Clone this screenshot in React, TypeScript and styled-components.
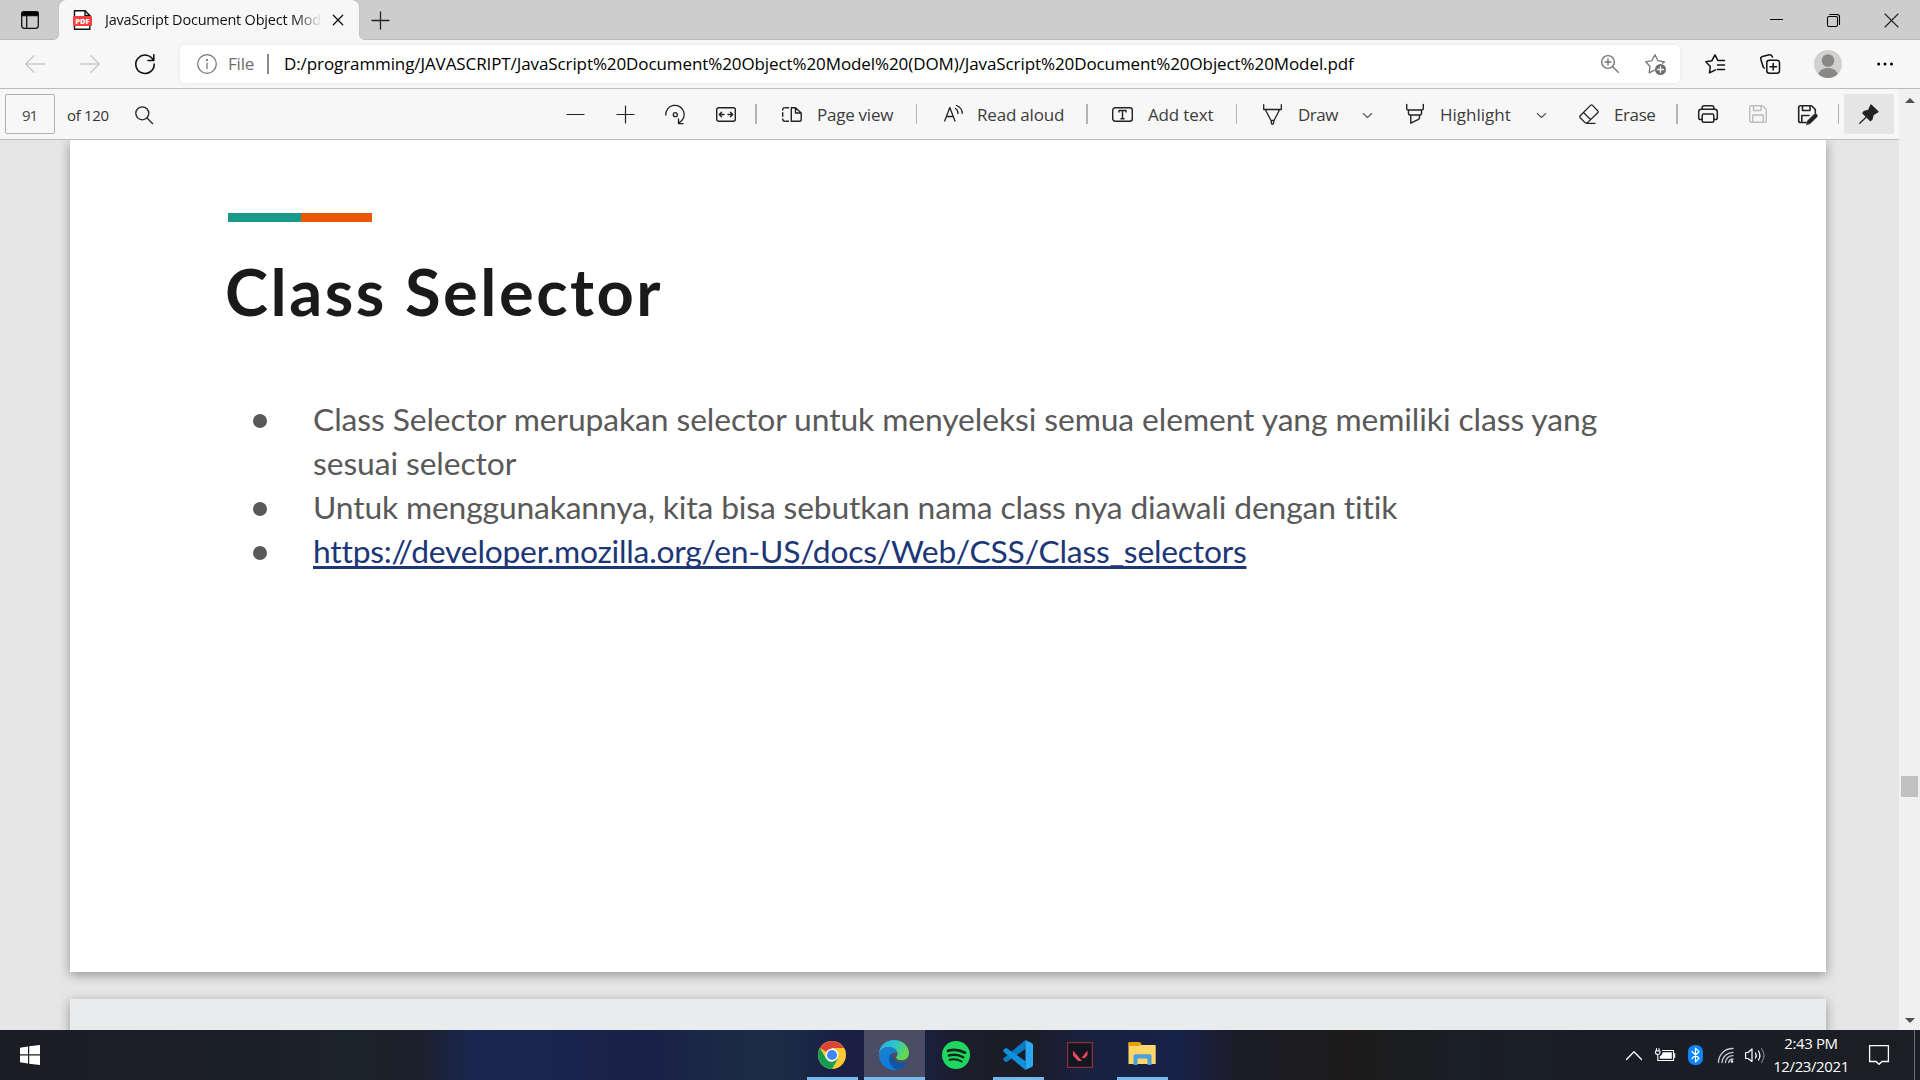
import React from "react";
import styled, { createGlobalStyle } from "styled-components";

const Global = createGlobalStyle`
  * { box-sizing: border-box; }
  html, body { margin: 0; padding: 0; overflow: hidden; }
  body { font-family: "Open Sans", "Noto Sans", sans-serif; }
`;

const Screen = styled.div`
  width: 1920px;
  height: 1080px;
  display: flex;
  flex-direction: column;
  overflow: hidden;
  background: #e6e6e6;
`;

const Glyph = styled.svg<{ $ml?: number; $color?: string; $sw?: number; $mt?: number }>`
  display: block;
  flex: none;
  overflow: visible;
  margin-left: ${(p) => p.$ml ?? 0}px;
  margin-top: ${(p) => p.$mt ?? 0}px;
  fill: none;
  stroke: ${(p) => p.$color ?? "#222"};
  stroke-width: ${(p) => p.$sw ?? 1.4};
  stroke-linecap: round;
  stroke-linejoin: round;
`;

type IconProps = {
  w: number;
  h: number;
  ml?: number;
  mt?: number;
  color?: string;
  sw?: number;
  children: React.ReactNode;
};

const Icon = ({ w, h, ml, mt, color, sw, children }: IconProps) => (
  <Glyph width={w} height={h} viewBox={`0 0 ${w} ${h}`} $ml={ml} $mt={mt} $color={color} $sw={sw}>
    {children}
  </Glyph>
);

const Label = styled.span<{ $w: number; $ml?: number; $ls?: number; $size?: number; $color?: string }>`
  flex: none;
  width: ${(p) => p.$w}px;
  margin-left: ${(p) => p.$ml ?? 0}px;
  white-space: nowrap;
  font-size: ${(p) => p.$size ?? 17}px;
  line-height: 24px;
  letter-spacing: ${(p) => p.$ls ?? 0}px;
  color: ${(p) => p.$color ?? "#3c3c3c"};
`;

const ToolLabel = styled(Label)`
  margin-top: 1px;
`;

const Rule = styled.i<{ $ml: number; $w?: number; $color?: string }>`
  flex: none;
  width: ${(p) => p.$w ?? 1}px;
  height: 20px;
  margin-left: ${(p) => p.$ml}px;
  background: ${(p) => p.$color ?? "#b4b4b4"};
`;

/* Tab strip */

const TabStrip = styled.header`
  flex: none;
  height: 40px;
  display: flex;
  align-items: center;
  background: #cdcdcd;
  box-shadow: inset 0 -1px 0 #bbb;
`;

const Tab = styled.div`
  position: relative;
  flex: none;
  width: 300px;
  height: 40px;
  margin-left: 20px;
  display: flex;
  align-items: center;
  background: #f7f7f7;
  border-radius: 7px 7px 0 0;
  box-shadow: 0 -1px 2px rgba(0, 0, 0, 0.12);
  &::before,
  &::after {
    content: "";
    position: absolute;
    bottom: 0;
    width: 6px;
    height: 6px;
  }
  &::before {
    left: -6px;
    background: radial-gradient(circle at 0 0, #cdcdcd 5px, #bbb 5.5px, #f7f7f7 6.5px);
  }
  &::after {
    right: -6px;
    background: radial-gradient(circle at 100% 0, #cdcdcd 5px, #bbb 5.5px, #f7f7f7 6.5px);
  }
`;

const TabTitle = styled(Label)`
  mask-image: linear-gradient(to right, #000 190px, transparent 217px);
`;

const WindowControls = styled.div`
  margin-left: auto;
  padding-right: 22px;
  display: flex;
  align-items: center;
`;

/* Address row */

const AddressRow = styled.div`
  flex: none;
  height: 49px;
  display: flex;
  align-items: center;
  background: #f7f7f7;
  border-bottom: 1px solid #bbb;
`;

const AddressBar = styled.div`
  flex: none;
  width: 1500px;
  height: 38px;
  margin-left: 25px;
  display: flex;
  align-items: center;
  background: #fff;
  border-radius: 5px;
  box-shadow: 0 0 4px rgba(0, 0, 0, 0.08);
`;

const Avatar = styled.div`
  flex: none;
  width: 28px;
  height: 28px;
  margin-left: 34px;
  border-radius: 50%;
  overflow: hidden;
  background: #d2d0ce;
`;

/* PDF viewer */

const Viewer = styled.div`
  flex: none;
  height: 941px;
  display: flex;
`;

const ViewerMain = styled.div`
  width: 1899px;
  display: flex;
  flex-direction: column;
`;

const PdfBar = styled.div`
  flex: none;
  height: 51px;
  display: flex;
  align-items: center;
  background: #f7f7f7;
  border-bottom: 1px solid #bbb;
`;

const PageInput = styled.div`
  flex: none;
  width: 50px;
  height: 40px;
  margin-left: 5px;
  padding-left: 16px;
  display: flex;
  align-items: center;
  border: 1px solid #b0b0b0;
  border-radius: 2px;
`;

const PinButton = styled.div`
  flex: none;
  width: 50px;
  height: 40px;
  margin-left: 5px;
  display: flex;
  align-items: center;
  background: #e5e5e5;
  border-radius: 2px;
`;

const Canvas = styled.div`
  flex: 1;
  overflow: hidden;
  display: flex;
  flex-direction: column;
  gap: 27px;
  padding-left: 70px;
  background: #e6e6e6;
`;

const Sheet = styled.section<{ $h: number; $bg: string }>`
  flex: none;
  display: flow-root;
  width: 1756px;
  height: ${(p) => p.$h}px;
  background: ${(p) => p.$bg};
  box-shadow: 0 3px 11px rgba(0, 0, 0, 0.36);
`;

const Accent = styled.div`
  width: 144px;
  height: 9px;
  margin: 73px 0 0 158px;
  background: linear-gradient(to right, #1a9988 73px, #eb5600 73px);
`;

const Heading = styled.h1`
  margin: 29px 0 0 155px;
  font-family: Lato, sans-serif;
  font-size: 65px;
  line-height: 80px;
  font-weight: 700;
  letter-spacing: 2.5px;
  color: #1a1a1a;
  white-space: nowrap;
`;

const Bullets = styled.ul`
  margin: 66px 0 0 158px;
  padding: 0;
  list-style: none;
  font-family: Lato, sans-serif;
  font-size: 31.8px;
  line-height: 44px;
  font-variant-ligatures: none;
  color: #595959;
`;

const Bullet = styled.li<{ $ls?: number }>`
  display: flex;
  white-space: nowrap;
  letter-spacing: ${(p) => p.$ls ?? 0}px;
  &::before {
    content: "";
    flex: none;
    width: 14px;
    height: 14px;
    margin: 17px 46px 0 25px;
    border-radius: 50%;
    background: #595959;
  }
`;

const DocLink = styled.a`
  color: #1c3678;
  text-decoration: underline;
  text-decoration-thickness: 3px;
  text-underline-offset: 3px;
  text-decoration-skip-ink: none;
`;

const Scrollbar = styled.div`
  width: 21px;
  display: flex;
  flex-direction: column;
  align-items: center;
  background: #f0f0f0;
`;

const Thumb = styled.div`
  width: 17px;
  height: 21px;
  margin-top: 673px;
  background: #c1c1c1;
`;

/* Taskbar */

const Taskbar = styled.footer`
  flex: none;
  height: 50px;
  display: flex;
  align-items: center;
  background: linear-gradient(
    to right,
    #1b1d25 0,
    #1b1f27 250px,
    #1b232a 350px,
    #1b202c 420px,
    #1a264e 470px,
    #1a2149 650px,
    #1b2c44 750px,
    #1b2b46 790px,
    #191f45 840px,
    #1a2042 920px,
    #1b1d2b 960px,
    #1b1c26 1030px,
    #19213f 1080px,
    #182148 1180px,
    #1b1c25 1240px,
    #1d1b1b 1350px,
    #1a1f24 1460px,
    #1a1d26 1600px,
    #1b1e24 1920px
  );
`;

const Task = styled.div<{ $w: number; $ml: number; $active?: boolean; $open?: boolean }>`
  flex: none;
  width: ${(p) => p.$w}px;
  height: 50px;
  margin-left: ${(p) => p.$ml}px;
  padding-right: ${(p) => p.$w % 2}px;
  display: flex;
  align-items: center;
  justify-content: center;
  background: ${(p) => (p.$active ? "#4a4d64" : "transparent")};
  box-shadow: ${(p) => (p.$open ? "inset 0 -3px 0 #76b9ed" : "none")};
`;

const Tray = styled.div`
  margin-left: auto;
  height: 50px;
  display: flex;
  align-items: center;
`;

const Clock = styled.div`
  width: 74px;
  margin-left: 9px;
  display: flex;
  flex-direction: column;
  align-items: center;
  font-size: 15px;
  line-height: 23px;
  letter-spacing: -0.4px;
  color: #fff;
  white-space: nowrap;
`;

const DesktopEdge = styled.i`
  width: 1px;
  height: 50px;
  margin: 0 5px 0 25px;
  background: #6b6e73;
`;

const Chevron = ({ ml }: { ml: number }) => (
  <Icon w={9} h={5} ml={ml} mt={2} color="#555" sw={1.1}>
    <path d="M.3.5l4.2 4 4.2-4" />
  </Icon>
);

const Tabs = () => (
  <TabStrip>
    <Icon w={18} h={18} ml={21} color="#111" sw={1.3}>
      <rect x=".7" y=".7" width="16.6" height="16.6" rx="2.5" />
      <path d="M.7 4.5V3Q.7.7 3 .7H15Q17.300.7 17.300 3V4.500Z" fill="#000" />
      <path d="M5.700 5V17" />
    </Icon>
    <Tab>
      <Icon w={20} h={20} ml={14} color="#111" sw={1.4}>
        <path d="M1.500.7H12L16.800 5.500V19.300H1.500Z" fill="#fff" strokeLinejoin="miter" />
        <path d="M12 .7V5.500H16.800" />
        <rect x="0" y="6" width="19" height="10" rx="1" fill="#f93e3e" stroke="none" />
        <text
          x="9.500"
          y="13.700"
          textAnchor="middle"
          fill="#fff"
          stroke="none"
          fontFamily="Open Sans, sans-serif"
          fontSize="7.500"
          fontWeight="800"
        >
          PDF
        </text>
      </Icon>
      <TabTitle $w={217} $ml={12} $size={14.5} $ls={-0.22} $color="#111">
        JavaScript Document Object Mod
      </TabTitle>
      <Icon w={10} h={10} ml={11} color="#111" sw={1.3}>
        <path d="M.3.3l9.400 9.400M9.700.3L.3 9.700" />
      </Icon>
    </Tab>
    <Icon w={17} h={17} ml={13} color="#222" sw={1.3}>
      <path d="M0 8.500H17M8.500 0V17" />
    </Icon>
    <WindowControls>
      <Icon w={13} h={13} color="#000" sw={1}>
        <path d="M0 5.500H13" strokeLinecap="butt" />
      </Icon>
      <Icon w={13} h={13} ml={44} color="#000" sw={1.1}>
        <rect x=".5" y="2.500" width="10" height="10" rx="1.500" />
        <path d="M2.800.5H10Q12.500.5 12.500 3V10.500" />
      </Icon>
      <Icon w={13} h={13} ml={45} color="#222" sw={1.1}>
        <path d="M0 0l13 13M13 0L0 13" />
      </Icon>
    </WindowControls>
  </TabStrip>
);

const Address = () => (
  <AddressRow>
    <Icon w={20} h={18} ml={25} mt={-1} color="#c9c9c9" sw={1.4}>
      <path d="M19.500 9H.8M9 .7L.7 9l8.300 8.300" />
    </Icon>
    <Icon w={20} h={18} ml={35} mt={-1} color="#c9c9c9" sw={1.4}>
      <path d="M.5 9H19.200M11 .7L19.300 9l-8.300 8.300" />
    </Icon>
    <Icon w={20} h={20} ml={35} color="#111" sw={1.6}>
      <path d="M18.400 6.500A9.200 9.200 0 1 0 19.200 10M18.800.8V6.500H13" />
    </Icon>
    <AddressBar>
      <Icon w={20} h={20} ml={17} color="#707070" sw={1.2}>
        <circle cx="10" cy="10" r="9.300" />
        <path d="M10 9V14.500" />
        <circle cx="10" cy="6" r=".5" fill="#707070" />
      </Icon>
      <Label $w={27} $ml={11} $ls={-0.2} $color="#6e6e6e">File</Label>
      <Rule $ml={12} $w={2} $color="#8c8c8c" />
      <Label $w={1100} $ml={15} $ls={-0.095} $color="#000">
        D:/programming/JAVASCRIPT/JavaScript%20Document%20Object%20Model%20(DOM)/JavaScript%20Document%20Object%20Model.pdf
      </Label>
      <Icon w={18} h={18} ml={217} color="#767676" sw={1.4}>
        <circle cx="7" cy="7" r="6.400" />
        <path d="M11.700 11.700L17.300 17.300M4 7H10M7 4V10" />
      </Icon>
      <Icon w={21} h={21} ml={26} color="#767676" sw={1.3}>
        <path d="M9.500 16.200L4.200 18.800 5 12.500.8 7.800 6.800 6.700 10 .8 13 6.700 19.500 7.800 17.600 9.300" />
        <circle cx="15.500" cy="15.500" r="5.500" fill="#6e6e6e" stroke="none" />
        <path d="M12.700 15.500h5.600M15.500 12.700v5.600" stroke="#fff" />
      </Icon>
    </AddressBar>
    <Icon w={20} h={20} ml={25} color="#111" sw={1.5}>
      <path d="M10.500 15.800L4.500 18.800 5.300 12.500.8 7.800 6.900 6.700 10 .8 12.800 6.500H19.500M12.500 11H19.500M12.500 15.500H19.500" />
    </Icon>
    <Icon w={20} h={20} ml={35} color="#111" sw={1.5}>
      <rect x="6.800" y="6.300" width="12.700" height="13" rx="2.500" />
      <path d="M10 12.800h6.500M13.200 9.500V16M4.300 14L3.300 13.300 .8 5.300Q.300 3.300 2.300 2.600L9.500.8Q11.600.4 12.500 3" />
    </Icon>
    <Avatar>
      <Icon w={28} h={28} color="none">
        <circle cx="14" cy="10.500" r="6.300" fill="#8a8784" />
        <ellipse cx="14" cy="26" rx="10" ry="8" fill="#8a8784" />
      </Icon>
    </Avatar>
    <Icon w={17} h={4} ml={35} color="none">
      <g fill="#000">
        <circle cx="1.700" cy="2" r="1.500" />
        <circle cx="8" cy="2" r="1.500" />
        <circle cx="14.500" cy="2" r="1.500" />
      </g>
    </Icon>
  </AddressRow>
);

const Tools = () => (
  <PdfBar>
    <PageInput>
      <ToolLabel $w={20} $size={15} $ls={-1} $color="#444">91</ToolLabel>
    </PageInput>
    <ToolLabel $w={42} $ml={12} $size={15} $ls={-0.3} $color="#333">of 120</ToolLabel>
    <Icon w={18} h={18} ml={26} mt={1} sw={1.3}>
      <circle cx="7.300" cy="7.300" r="6.500" />
      <path d="M12 12l5.500 5.500" />
    </Icon>
    <Icon w={17} h={17} ml={414} mt={1} sw={1.2}>
      <path d="M0 8.500H17" />
    </Icon>
    <Icon w={17} h={17} ml={33} mt={1} sw={1.2}>
      <path d="M0 8.500H17M8.500 0V17" />
    </Icon>
    <Icon w={20} h={21} ml={31} sw={1.3}>
      <path d="M.8 11A9.200 9.200 0 1 1 14 18.800M13.500 15V19.700H18" />
      <circle cx="10.300" cy="10.700" r="2" />
    </Icon>
    <Icon w={20} h={15} ml={31} sw={1.4}>
      <rect x=".7" y=".7" width="18.600" height="13.600" rx="2" />
      <path d="M3.500 7.500H8M12 7.500h4.500M5.500 5.300L3.300 7.500l2.200 2.200M14.500 5.300L16.700 7.500l-2.200 2.200" />
    </Icon>
    <Rule $ml={19} $w={2} />
    <Icon w={20} h={15} ml={25} sw={1.4}>
      <path d="M9.300.7H13.500L19.200 6V12.500Q19.200 14.300 17.400 14.300H9.300ZM13.500.7V6H19.200" />
      <path d="M6.500.7H3Q.7.7.7 3M.7 5.800V9.200M.7 12Q.7 14.300 3 14.300H6.500" strokeDasharray="3.500 1.200" />
    </Icon>
    <ToolLabel $w={78} $ml={15} $ls={-0.25}>Page view</ToolLabel>
    <Rule $ml={21} />
    <Icon w={19} h={18} ml={27} mt={-2} sw={1.3}>
      <path d="M.7 17L5.800 3.500 11 17M2.500 12.500H9.200M11.500 4.500Q14 6 14 9.500M12.500 1.500Q18 3.500 18.200 9.300" />
    </Icon>
    <ToolLabel $w={88} $ml={14} $ls={-0.2}>Read aloud</ToolLabel>
    <Rule $ml={21} $w={2} />
    <Icon w={21} h={15} ml={24} sw={1.4}>
      <rect x=".7" y=".7" width="19.600" height="13.600" rx="2.500" />
      <path d="M7 5V3.500H14V5M10.500 3.500V11.800M9 11.800h3" />
    </Icon>
    <ToolLabel $w={66} $ml={15} $ls={-0.15}>Add text</ToolLabel>
    <Rule $ml={22} />
    <Icon w={19} h={21} ml={26} sw={1.3}>
      <path d="M.7.7V5.500H18.300V.7M2.300 5.500L8 16.500H11L16.700 5.500M8 16.500L8.500 19.500Q9.500 20.700 10.500 19.500L11 16.500" />
    </Icon>
    <ToolLabel $w={40} $ml={16} $ls={-0.5}>Draw</ToolLabel>
    <Chevron ml={25} />
    <Icon w={18} h={20} ml={34} sw={1.4}>
      <path d="M.7.5V4.500Q.7 6 2.200 6H15.800Q17.300 6 17.300 4.500V.5M2.500 6V9.500Q2.500 11 4 11H14Q15.500 11 15.500 9.500V6M4.800 11V19.200L12.500 15.300Q13.500 14.800 13.500 13.500V11" />
    </Icon>
    <ToolLabel $w={72} $ml={16} $ls={0}>Highlight</ToolLabel>
    <Chevron ml={25} />
    <Icon w={20} h={20} ml={33} sw={1.3}>
      <path d="M1.200 11.700L11.500 1.400Q12.500.4 13.500 1.400L18.700 6.700Q19.700 7.700 18.700 8.700L8.500 18.600Q7.300 19.600 6 18.600L1.200 13.700Q.3 12.700 1.200 11.700ZM4.500 8.500L11.500 15.500M7.500 19.300H16" />
    </Icon>
    <ToolLabel $w={40} $ml={15} $ls={-0.4}>Erase</ToolLabel>
    <Rule $ml={22} $w={2} />
    <Icon w={20} h={18} ml={20} sw={1.5}>
      <path d="M4.200 14.500H2.500Q.7 14.500.7 12.700V7Q.7 4.300 3.300 4.300H16.700Q19.300 4.300 19.300 7V12.700Q19.300 14.500 17.500 14.500H15.800M4.200 4.300V2.500Q4.200.7 6 .7H14Q15.800.7 15.800 2.500V4.300" />
      <rect x="4.200" y="9" width="11.600" height="8.300" rx="1.500" />
    </Icon>
    <Icon w={18} h={18} ml={31} color="#bdbdbd" sw={1.4}>
      <path d="M.7 2.500Q.7.7 2.500.7H13.500L17.300 4.500V15.500Q17.300 17.300 15.500 17.300H2.500Q.7 17.300.7 15.500ZM4.500.7V5.500H12V.7M3.800 17.300V10H14.200V17.300" />
    </Icon>
    <Icon w={20} h={20} ml={31} mt={1} sw={1.6}>
      <path d="M8 17.500H2.500Q.7 17.500.7 15.700V2.500Q.7.7 2.500.7H13.500L17.300 4.500V8M4.500.7V5.500H12V.7M3.800 17.500V10.500H11" />
      <path d="M8.500 19.500L9.500 15.800 16.300 9.200Q17.700 8.300 18.900 9.500 19.900 10.700 18.900 12L12.200 18.500Z" fill="#222" strokeWidth=".6" />
    </Icon>
    <Rule $ml={20} />
    <PinButton>
      <Icon w={20} h={20} ml={15} color="#222" sw={1.2}>
        <path d="M12 1L19 7.800 17.500 8.800Q16.800 9.200 14.300 10.500L12.800 15.500 11.300 16.700 3.800 9 5 7.500 9.800 6 11.300 2.200Z" fill="#222" />
        <path d="M7 13.200L.8 19.300" />
      </Icon>
    </PinButton>
  </PdfBar>
);

const App = () => (
  <Screen>
    <Global />
    <Tabs />
    <Address />
    <Viewer>
      <ViewerMain>
        <Tools />
        <Canvas>
          <Sheet $h={832} $bg="#fff">
            <Accent />
            <Heading>Class Selector</Heading>
            <Bullets>
              <Bullet $ls={-0.09}>
                <span>
                  Class Selector merupakan selector untuk menyeleksi semua element yang memiliki class yang
                  <br />
                  sesuai selector
                </span>
              </Bullet>
              <Bullet $ls={-0.15}>
                Untuk menggunakannya, kita bisa sebutkan nama class nya diawali dengan titik
              </Bullet>
              <Bullet $ls={-0.22}>
                <DocLink>https://developer.mozilla.org/en-US/docs/Web/CSS/Class_selectors</DocLink>
              </Bullet>
            </Bullets>
          </Sheet>
          <Sheet $h={200} $bg="#e8eced" />
        </Canvas>
      </ViewerMain>
      <Scrollbar>
        <Icon w={10} h={5} mt={9} color="none">
          <path d="M0 5L5 0l5 5Z" fill="#505050" />
        </Icon>
        <Thumb />
        <Icon w={10} h={5} mt={221} color="none">
          <path d="M0 0L5 5l5-5Z" fill="#505050" />
        </Icon>
      </Scrollbar>
    </Viewer>
    <Taskbar>
      <Icon w={20} h={20} ml={20} color="none">
        <path d="M0 2.700L8 1.500V9.300H0ZM9.200 1.300L20 0V9.300H9.200ZM0 10.500H8V18.500L0 17.300ZM9.200 10.500H20V20L9.200 18.700Z" fill="#fff" />
      </Icon>
      <Task $w={51} $ml={767} $open>
        <Icon w={28} h={28} color="none">
          <circle cx="14" cy="14" r="14" fill="#fcc934" />
          <path d="M14 14L1.880 7A14 14 0 0 1 26.120 7H14Z" fill="#db4437" />
          <path d="M14 21L20 17.500 14 28A14 14 0 0 1 1.880 7L8 17.500Q10 21 14 21Z" fill="#0f9d58" />
          <circle cx="14" cy="14" r="6.400" fill="#fff" />
          <circle cx="14" cy="14" r="5.100" fill="#4285f4" />
        </Icon>
      </Task>
      <Task $w={61} $ml={6} $active $open>
        <Icon w={30} h={30} color="none">
          <defs>
            <linearGradient id="edgeTop" x1="0" y1="0" x2="1" y2=".4">
              <stop offset="0" stopColor="#35a8e8" />
              <stop offset=".5" stopColor="#2bc3d2" />
              <stop offset="1" stopColor="#62d94c" />
            </linearGradient>
            <linearGradient id="edgeBody" x1="0" y1="0" x2=".4" y2="1">
              <stop offset="0" stopColor="#1b82c8" />
              <stop offset="1" stopColor="#0a7ce0" />
            </linearGradient>
          </defs>
          <path d="M0 14C.5 5 7 0 15 0c9 0 15 6.300 15 13 0 4.500-3.500 7.300-7.500 7.300-3.500 0-5.300-1.300-5.300-2.500 0-1 1.300-1.500 1.300-4C18.500 10 14 7 9.500 7 5 7 1.500 9.500 0 14Z" fill="url(#edgeTop)" />
          <path d="M0 14.500C1 9.500 5 7 9.500 7c4.500 0 8 2 9 6-1-.8-2.500-1-4-.5-3 1.200-4.500 4.500-4 8 .6 4.500 4 8.500 8.500 9A15 15 0 0 1 0 14.500Z" fill="url(#edgeBody)" />
          <path d="M12.500 13.500c-2.500 2-3 5-2 8.500 1.300 4 4.500 7 8.500 7.500 4-1 7.200-3.700 8.700-6.500.3-.6-.2-1-.8-.7C21 25 12.500 22 12.500 13.500Z" fill="#0f55a8" />
        </Icon>
      </Task>
      <Task $w={62} $ml={0}>
        <Icon w={28} h={28} color="#14231a" sw={2.4}>
          <circle cx="14" cy="14" r="14" fill="#1ed760" stroke="none" />
          <path d="M6 9.800Q15 7.300 23 11.700" strokeWidth="2.700" />
          <path d="M6.800 14.500Q14.500 12.500 21.300 16.200" />
          <path d="M7.500 18.800Q14 17.300 19.700 20.500" strokeWidth="1.900" />
        </Icon>
      </Task>
      <Task $w={51} $ml={6} $open>
        <Icon w={30} h={30} color="none">
          <path d="M22.500 0V9L4 21.800Q3 22.500 2 21.500L.5 20Q-.4 19 .5 18.200Z" fill="#0a7cc4" />
          <path d="M22.500 30V21.300L4 8.200Q3 7.500 2 8.500L.5 10Q-.4 11 .5 11.800Z" fill="#0f8fdc" />
          <path d="M22 0L28.800 3Q30 3.500 30 5V25Q30 26.500 28.800 27L22 30Q22.500 29 22.500 28V2Q22.500 1 22 0Z" fill="#2aa9f2" />
        </Icon>
      </Task>
      <Task $w={50} $ml={11}>
        <Icon w={26} h={26} color="#8f2d3a" sw={1.2}>
          <rect x=".6" y=".6" width="24.800" height="24.800" fill="#101720" />
          <path d="M6 8.500L15 19H11L6 13.500ZM20.500 8.500V13L18 16H14.500Z" fill="#f2475a" stroke="none" />
        </Icon>
      </Task>
      <Task $w={51} $ml={12} $open>
        <Icon w={28} h={24} mt={-3} color="none">
          <path d="M.5 1Q.5.3 1.300.3H11.500L13.500 3H27Q27.700 3 27.700 3.800V22H.5Z" fill="#ffd768" />
          <path d="M.5 1Q.5.3 1.300.3H11.500L13.500 1.500 12 4H.5Z" fill="#e6a100" />
          <path d="M5.500 23V14Q5.500 12.300 7.200 12.300H21.800Q23.500 12.300 23.500 14V23H19.500V17.500Q19.500 16.500 18.500 16.500H10.500Q9.500 16.500 9.500 17.500V23Z" fill="#4a9fdc" />
        </Icon>
      </Task>
      <Tray>
        <Icon w={16} h={9} color="#fff" sw={1.3}>
          <path d="M.5 8.500L8 .8l7.500 7.700" />
        </Icon>
        <Icon w={20} h={14} ml={13} color="#fff" sw={1.1}>
          <path d="M1.500.5V2.500M4 .5V2.500M.5 3H5V5Q4.700 6.500 2.800 6.500 1 6.500.5 5ZM2.800 6.500V12.500H18.500V2.500H7.500" />
          <path d="M7.500 4.300H16.800V10.800H4.800V8.300Q6.800 7.500 7.500 5Z" fill="#fff" stroke="none" />
          <path d="M19.700 5.500V9.500" />
        </Icon>
        <Icon w={15} h={20} ml={13} color="#fff" sw={1.2}>
          <rect width="15" height="20" rx="6.500" fill="#0a84ff" stroke="none" />
          <path d="M4 6.500L11 13.300 7.500 16.800V3.200L11 6.700 4 13.500" />
        </Icon>
        <Icon w={16} h={15} ml={15} color="#c9cacc" sw={1.3}>
          <path d="M.5 14.500A14 14 0 0 1 15 .5M4 14.500A11 11 0 0 1 15 4.300M7.300 14.500A7.600 7.600 0 0 1 15 7.700M10.700 14.500A4.500 4.500 0 0 1 15 11" />
          <circle cx="14" cy="13.500" r="1.200" fill="#fff" stroke="none" />
        </Icon>
        <Icon w={20} h={17} ml={11} color="#fff" sw={1.2}>
          <path d="M.6 5.500H3L7 2V14.500L3 11.500H.6ZM10.500 6Q12 8.500 10.500 11M13.500 4Q16.300 8.500 13.500 13" />
          <path d="M16.500 1.500Q21.500 8.500 16.500 15.500" stroke="#777b80" />
        </Icon>
        <Clock>
          <span>2:43 PM</span>
          <span>12/23/2021</span>
        </Clock>
        <Icon w={20} h={20} ml={21} color="#fff" sw={1.3}>
          <path d="M.6.7H19.400V16.500H13L10 19.300 7 16.500H.6Z" strokeLinejoin="miter" />
        </Icon>
        <DesktopEdge />
      </Tray>
    </Taskbar>
  </Screen>
);

export default App;
